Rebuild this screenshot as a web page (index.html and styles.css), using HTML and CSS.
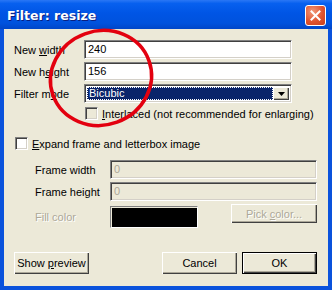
FILE: index.html
```html
<!DOCTYPE html>
<html lang="en">
  <head>
    <meta charset="UTF-8" />
    <title>Filter: resize</title>
    <link rel="stylesheet" href="styles.css">
  </head>
  <body>
    <div class="window">
      <div class="titlebar">
        <span class="title">Filter: resize</span>
        <span class="close">
          <svg width="11" height="11" viewBox="0 0 11 11">
            <path d="M1.5 1.5 L9.5 9.5 M9.5 1.5 L1.5 9.5" stroke="#fff" stroke-width="2" stroke-linecap="square" />
          </svg>
        </span>
      </div>

      <div class="dialog">
        <div class="size-rows">
          <div class="row">
            <label>New <u>w</u>idth</label>
            <div class="edit">240</div>
          </div>
          <div class="row">
            <label>New h<u>e</u>ight</label>
            <div class="edit">156</div>
          </div>
          <div class="row">
            <label>Filter m<u>o</u>de</label>
            <div class="combo">
              <div class="combo-value"><span>Bicubic</span></div>
              <div class="combo-arrow">
                <svg width="7" height="4" viewBox="0 0 7 4"><path d="M0 0 H7 L3.5 4 Z" fill="#000" /></svg>
              </div>
            </div>
          </div>
        </div>

        <div class="check interlaced">
          <span class="box disabled"></span>
          <span><u>I</u>nterlaced (not recommended for enlarging)</span>
        </div>

        <div class="check expand">
          <span class="box"></span>
          <span><u>E</u>xpand frame and letterbox image</span>
        </div>

        <div class="frame-rows">
          <div class="row">
            <label>Frame width</label>
            <div class="edit off">0</div>
          </div>
          <div class="row">
            <label>Frame height</label>
            <div class="edit off">0</div>
          </div>
          <div class="row fill-row">
            <label class="grey">Fill color</label>
            <div class="swatch"></div>
            <div class="btn pick grey"><span>Pick <u>c</u>olor...</span></div>
          </div>
        </div>

        <div class="buttons">
          <div class="btn"><span>Show <u>p</u>review</span></div>
          <div class="spacer"></div>
          <div class="btn"><span>Cancel</span></div>
          <div class="btn default"><span>OK</span></div>
        </div>
      </div>

      <!-- marker drawn over the screenshot -->
      <svg class="marker" width="332" height="290" viewBox="0 0 332 290">
        <ellipse cx="101" cy="78" rx="51" ry="47" transform="rotate(-20 101 78)" fill="none" stroke="#e3000f" stroke-width="3.5" />
      </svg>
    </div>
  </body>
</html>
```

FILE: styles.css
```css
body {
  margin: 0;
  font-family: "Liberation Sans", Arial, sans-serif;
  font-size: 11px;
  color: #000;
}

.window {
  position: relative;
  width: 332px;
  height: 290px;
  display: flex;
  flex-direction: column;
  background: #0a52dc;
  overflow: hidden;
}

.titlebar {
  height: 29px;
  flex: none;
  display: flex;
  align-items: center;
  justify-content: space-between;
  padding: 0 6px 0 7px;
  background: linear-gradient(#2a77f5, #0760ef 12%, #0055e5 45%, #0052dd 80%, #0046c8);
}

.title {
  color: #fff;
  font-family: "DejaVu Sans", sans-serif;
  font-weight: bold;
  font-size: 12.5px;
  text-shadow: 1px 1px #0a1e80;
  margin-top: 1px;
}

.close {
  width: 19px;
  height: 19px;
  display: flex;
  align-items: center;
  justify-content: center;
  border: 1px solid #fff;
  border-radius: 3px;
  background: radial-gradient(circle at 35% 30%, #f19a7b, #e0532f 55%, #c83e1b);
  margin-top: 1px;
}

.dialog {
  flex: 1;
  margin: 0 4px 4px;
  background: #ece9d8;
  padding: 11px 11px 0 10px;
  display: flex;
  flex-direction: column;
}

.size-rows,
.frame-rows {
  display: flex;
  flex-direction: column;
  gap: 3px;
}

.row {
  display: flex;
  align-items: center;
  height: 19px;
}

.size-rows label {
  width: 70px;
}

.edit {
  box-sizing: border-box;
  width: 208px;
  height: 19px;
  padding: 2px 0 0 3px;
  background: #fff;
  border-top: 1px solid #808080;
  border-left: 1px solid #808080;
  border-right: 1px solid #fff;
  border-bottom: 1px solid #fff;
  box-shadow: inset 1px 1px #404040, inset -1px -1px #d4d0c8;
}

.edit.off {
  width: 207px;
  background: #ece9d8;
  color: #aca899;
}

.combo {
  box-sizing: border-box;
  width: 208px;
  height: 19px;
  display: flex;
  padding: 2px;
  background: #fff;
  border-top: 1px solid #808080;
  border-left: 1px solid #808080;
  border-right: 1px solid #fff;
  border-bottom: 1px solid #fff;
  box-shadow: inset 1px 1px #404040, inset -1px -1px #d4d0c8;
}

.combo-value {
  flex: 1;
  background: #0a246a;
  color: #fff;
  outline: 1px dotted #fff;
  outline-offset: -1px;
  padding-left: 2px;
  line-height: 13px;
}

.combo-arrow {
  width: 16px;
  display: flex;
  align-items: center;
  justify-content: center;
  background: #ece9d8;
  box-shadow: inset 1px 1px #fff, inset -1px -1px #404040, inset -2px -2px #aca899;
}

.check {
  display: flex;
  align-items: center;
  gap: 4px;
  height: 13px;
}

.interlaced {
  margin: 4px 0 0 71px;
}

.expand {
  margin: 17px 0 0 1px;
}

.box {
  box-sizing: border-box;
  width: 13px;
  height: 13px;
  background: #fff;
  border-top: 1px solid #808080;
  border-left: 1px solid #808080;
  border-right: 1px solid #fff;
  border-bottom: 1px solid #fff;
  box-shadow: inset 1px 1px #404040, inset -1px -1px #d4d0c8;
}

.box.disabled {
  background: #ece9d8;
}

.frame-rows {
  margin: 10px 0 0 21px;
}

.frame-rows label {
  width: 75px;
}

.fill-row {
  height: 24px;
  align-items: flex-start;
}

.fill-row label {
  margin-top: 7px;
}

.grey {
  color: #aca899;
  text-shadow: 1px 1px #fff;
}

.swatch {
  box-sizing: border-box;
  width: 88px;
  height: 22px;
  margin-top: 2px;
  background: #000;
  border-top: 1px solid #808080;
  border-left: 1px solid #808080;
  border-right: 1px solid #fff;
  border-bottom: 1px solid #fff;
  box-shadow: inset 1px 1px #ece9d8;
}

.btn {
  box-sizing: border-box;
  width: 75px;
  height: 22px;
  display: flex;
  align-items: center;
  justify-content: center;
  background: #ece9d8;
  box-shadow: inset 1px 1px #fff, inset -1px -1px #404040, inset -2px -2px #aca899;
}

.btn.pick {
  width: 86px;
  height: 19px;
  margin-left: 33px;
}

.btn.default {
  border: 1px solid #000;
}

.buttons {
  display: flex;
  gap: 5px;
  margin-top: 24px;
}

.spacer {
  flex: 1;
}

.marker {
  position: absolute;
  left: 0;
  top: 0;
  pointer-events: none;
}
```
